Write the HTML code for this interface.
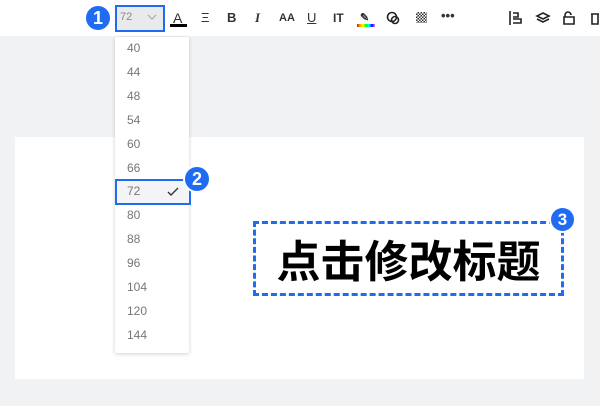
<!DOCTYPE html>
<html><head><meta charset="utf-8"><style>
*{margin:0;padding:0;box-sizing:border-box}
body{width:600px;height:406px;background:#f1f2f4;position:relative;overflow:hidden;font-family:"Liberation Sans","Noto Sans CJK SC",sans-serif}
.tb{position:absolute;left:0;top:0;width:600px;height:36px;background:#fff}
.i{position:absolute;top:9px;font-size:13px;color:#333;font-weight:bold;line-height:18px}
.badge{position:absolute;border-radius:50%;background:#1f6bf2;color:#fff;font-weight:bold;text-align:center;border:2px solid #fff}
.canvas{position:absolute;left:15px;top:137px;width:569px;height:242px;background:#fff}
.dd{position:absolute;left:115px;top:37px;width:74px;height:316px;background:#fff;box-shadow:0 1px 4px rgba(0,0,0,.18);border-radius:2px}
.it{position:absolute;left:12px;font-size:12px;color:#777}
</style></head><body>
<div class="tb"></div>
<div style="position:absolute;left:115px;top:5px;width:50px;height:27px;border:2px solid #1f6bf2;background:#e9eaec"></div>
<div style="position:absolute;left:120px;top:11px;font-size:11px;color:#888">72</div>
<svg style="position:absolute;left:147px;top:14px" width="10" height="7"><path d="M1 1l4 4 4-4" fill="none" stroke="#aaa" stroke-width="1.2"/></svg>
<div class="badge" style="left:84px;top:4px;width:28px;height:28px;font-size:18px;line-height:24px">1</div>
<div class="i" style="left:173px;font-weight:normal;font-size:14px">A</div>
<div style="position:absolute;left:170px;top:24px;width:17px;height:3px;background:#000"></div>
<div class="i" style="left:201px;font-weight:normal">Ξ</div>
<div class="i" style="left:227px">B</div>
<div class="i" style="left:255px;font-style:italic;font-family:'Liberation Serif',serif">I</div>
<div class="i" style="left:279px;font-size:11px">AA</div>
<div class="i" style="left:307px;text-decoration:underline;font-weight:normal">U</div>
<div class="i" style="left:333px;font-size:12px">IT</div>
<div class="i" style="left:360px;font-size:11px">✎</div>
<div style="position:absolute;left:357px;top:24px;width:18px;height:3px;background:linear-gradient(90deg,red,orange,yellow,lime,cyan,blue,violet)"></div>
<svg style="position:absolute;left:386px;top:11px" width="14" height="14"><circle cx="6" cy="6" r="4.5" fill="none" stroke="#222" stroke-width="1.6"/><circle cx="9" cy="9" r="3.5" fill="none" stroke="#222" stroke-width="1.6"/></svg>
<div style="position:absolute;left:416px;top:12px;width:11px;height:11px;background:repeating-conic-gradient(#333 0 25%,#fff 0 50%) 0 0/3px 3px"></div>
<div class="i" style="left:441px;top:7px">•••</div>
<svg style="position:absolute;left:508px;top:10px" width="110" height="16" fill="none" stroke="#222" stroke-width="1.6">
<path d="M2 1v14M5 3h5v4H5M5 9h8v4H5"/>
<path d="M35 3l6 3-6 3-6-3zM29 9l6 3 6-3"/>
<path d="M57 7v-2a3 3 0 0 1 6 0M56 7h10v7H56z"/>
<path d="M83 4h8M84 4v10h6V4"/>
</svg>
<div class="canvas"></div>
<div class="dd">
<div class="it" style="top:4px">40</div>
<div class="it" style="top:28px">44</div>
<div class="it" style="top:52px">48</div>
<div class="it" style="top:76px">54</div>
<div class="it" style="top:100px">60</div>
<div class="it" style="top:124px">66</div>
<div style="position:absolute;left:0;top:142px;width:76px;height:26px;border:2px solid #1f6bf2;background:#f3f4f6"></div>
<div class="it" style="top:147px">72</div>
<svg style="position:absolute;left:52px;top:150px" width="12" height="10"><path d="M1 5l3 3 7-7" fill="none" stroke="#333" stroke-width="1.4"/></svg>
<div class="it" style="top:171px">80</div>
<div class="it" style="top:195px">88</div>
<div class="it" style="top:219px">96</div>
<div class="it" style="top:243px">104</div>
<div class="it" style="top:267px">120</div>
<div class="it" style="top:291px">144</div>
</div>
<div class="badge" style="left:183px;top:165px;width:28px;height:28px;font-size:18px;line-height:24px">2</div>
<div style="position:absolute;left:253px;top:221px;width:311px;height:75px;border:3px dashed #1f6bf2"></div>
<div style="position:absolute;left:253px;top:228px;width:311px;text-align:center;font-family:'Noto Sans CJK SC',sans-serif;font-weight:bold;font-size:44px;line-height:60px;color:#000">点击修改标题</div>
<div class="badge" style="left:549px;top:206px;width:27px;height:27px;font-size:17px;line-height:23px">3</div>
</body></html>
